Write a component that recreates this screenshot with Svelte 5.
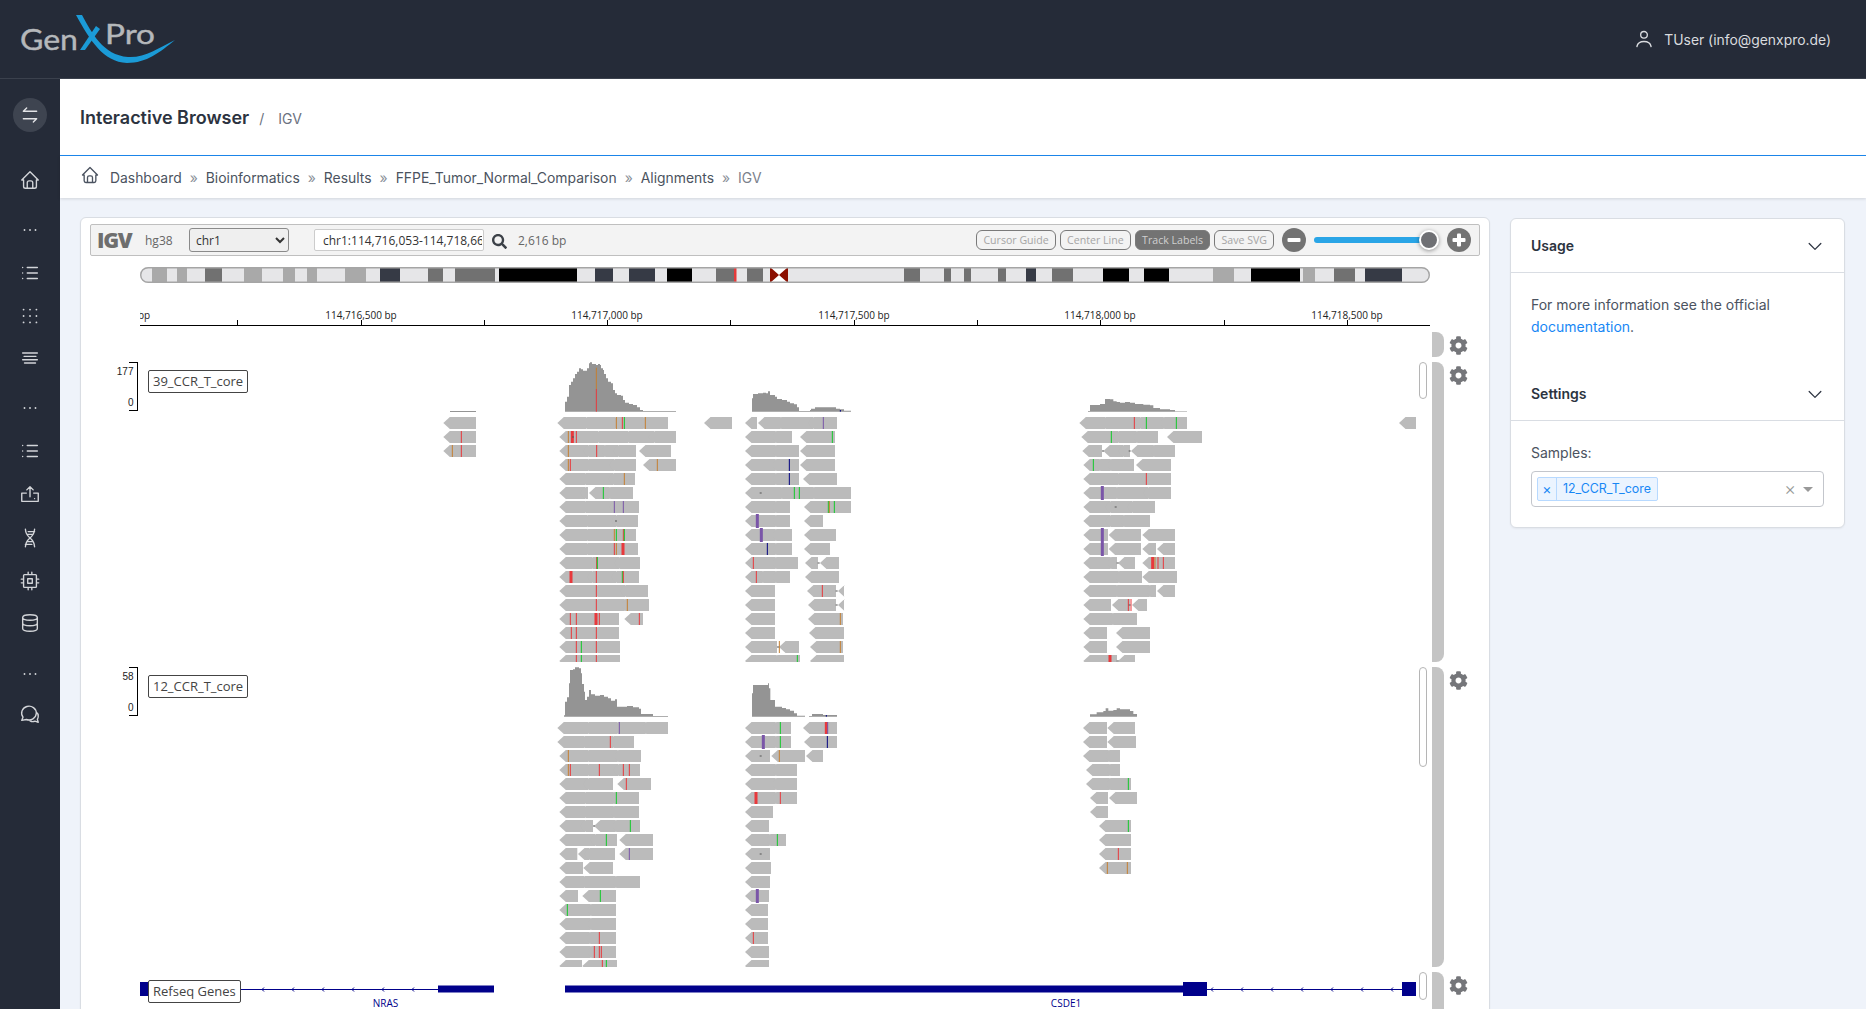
<script lang="ts">
	// sidebar entries, in order; `gap` marks the "..." section dividers
	const icons = {
		home: 'M5 12H3l9-9 9 9h-2 M5 12v7a2 2 0 0 0 2 2h10a2 2 0 0 0 2-2v-7 M9 21v-6a2 2 0 0 1 2-2h2a2 2 0 0 1 2 2v6',
		dots: 'M6 12h.01 M12 12h.01 M18 12h.01',
		list: 'M9 6h11 M9 12h11 M9 18h11 M4 6v.01 M4 12v.01 M4 18v.01',
		grid: 'M5 5h.01 M12 5h.01 M19 5h.01 M5 12h.01 M12 12h.01 M19 12h.01 M5 19h.01 M12 19h.01 M19 19h.01',
		lines: 'M4 6.5h16 M5.5 10.2h13 M4 13.9h16 M6 17.5h12',
		upload: 'M8 11H3v9h18v-9h-5 M12 15V4 M8.5 7.5 12 4l3.5 3.5 M17 17h.01',
		dna: 'M7 2.500c.2 4 2 7 5 9.500s4.800 5.500 5 9.500 M17 2.500c-.2 4-2 7-5 9.500s-4.800 5.500-5 9.500 M10 5h7 M9 8h6.500 M8.500 16h6.500 M7 19h7',
		cpu: 'M5 6a1 1 0 0 1 1-1h12a1 1 0 0 1 1 1v12a1 1 0 0 1-1 1H6a1 1 0 0 1-1-1z M9.5 9.5h5v5h-5z M2.5 10H5 M2.5 14H5 M10 2.5V5 M14 2.5V5 M21.5 10H19 M21.5 14H19 M14 21.5V19 M10 21.5V19',
		db: 'M4 6a8 3 0 1 0 16 0a8 3 0 1 0-16 0 M4 6v6a8 3 0 0 0 16 0V6 M4 12v6a8 3 0 0 0 16 0v-6',
		chat: 'M3 19l1.4-3.6A8 7.5 0 1 1 8 18z M18.6 9.5A6 6 0 0 1 21 14.5c0 1.4-.4 2.4-1 3.3l1 3.2-3.6-1.2c-1.6.7-3.6.7-5.4-.3'
	};
	const nav = [
		{ i: 'home' },
		{ i: 'dots', gap: true },
		{ i: 'list' },
		{ i: 'grid' },
		{ i: 'lines' },
		{ i: 'dots', gap: true },
		{ i: 'list' },
		{ i: 'upload' },
		{ i: 'dna' },
		{ i: 'cpu' },
		{ i: 'db' },
		{ i: 'dots', gap: true },
		{ i: 'chat' }
	];
	const crumbs = ['Dashboard', 'Bioinformatics', 'Results', 'FFPE_Tumor_Normal_Comparison', 'Alignments'];

	const GEAR =
		'M487.4 315.7l-42.6-24.6c4.3-23.2 4.3-47 0-70.2l42.6-24.6c4.9-2.8 7.1-8.6 5.5-14-11.1-35.6-30-67.8-54.7-94.6-3.8-4.1-10-5.1-14.8-2.3L380.8 110c-17.9-15.4-38.5-27.3-60.8-35.1V25.8c0-5.6-3.9-10.5-9.4-11.7-36.7-8.2-74.3-7.8-109.2 0-5.5 1.2-9.4 6.1-9.4 11.7V75c-22.2 7.9-42.8 19.8-60.8 35.1L88.7 85.5c-4.9-2.8-11-1.9-14.8 2.3-24.7 26.7-43.6 58.9-54.7 94.6-1.7 5.4.6 11.2 5.5 14L67.3 221c-4.3 23.2-4.3 47 0 70.2l-42.6 24.6c-4.9 2.8-7.1 8.6-5.5 14 11.1 35.6 30 67.8 54.7 94.6 3.8 4.1 10 5.1 14.8 2.3l42.6-24.6c17.9 15.4 38.5 27.3 60.8 35.1v49.2c0 5.6 3.9 10.5 9.4 11.7 36.7 8.2 74.3 7.8 109.2 0 5.5-1.2 9.4-6.1 9.4-11.7v-49.2c22.2-7.9 42.8-19.8 60.8-35.1l42.6 24.6c4.9 2.8 11 1.9 14.8-2.3 24.7-26.7 43.6-58.9 54.7-94.6 1.5-5.5-.7-11.3-5.6-14.1zM256 336c-44.1 0-80-35.9-80-80s35.9-80 80-80 80 35.9 80 80-35.9 80-80 80z';
	const SEARCH =
		'M505 442.7L405.3 343c-4.5-4.5-10.6-7-17-7H372c27.6-35.3 44-79.7 44-128C416 93.1 322.9 0 208 0S0 93.1 0 208s93.1 208 208 208c48.3 0 92.7-16.4 128-44v16.3c0 6.4 2.5 12.5 7 17l99.7 99.7c9.4 9.4 24.6 9.4 33.9 0l28.3-28.3c9.4-9.4 9.4-24.6.1-34zM208 336c-70.7 0-128-57.2-128-128 0-70.7 57.2-128 128-128 70.7 0 128 57.2 128 128 0 70.7-57.2 128-128 128z';

	// ideogram bands, genome pixels
	const A = '#a9a9a9', D = '#717171', K = '#363a45', B = '#000';
	const bands = [
		[152, 167, A], [177, 187, A], [205, 222, D], [244, 262, A], [283, 295, A], [307, 317, A], [345, 366, A],
		[380, 400, K], [428, 443, D], [455, 495, D], [499, 577, B], [595, 613, K], [629, 655, K], [667, 692, B],
		[716, 734, D], [734, 736.5, '#e43a3a'], [747, 763, D], [904, 920, D], [944, 951, D], [964, 971, D],
		[998, 1006, D], [1026, 1036, K], [1052, 1073, D], [1103, 1129, B], [1144, 1169, B], [1213, 1234, A],
		[1251, 1300, B], [1303, 1315, A], [1334, 1355, D], [1365, 1402, K]
	];
	const ticks = [237, 361, 484, 607, 730, 854, 977, 1100, 1224, 1347];
	const tickLabels = [
		[114.5, '114,716,000 bp'], [361, '114,716,500 bp'], [607, '114,717,000 bp'],
		[854, '114,717,500 bp'], [1100, '114,718,000 bp'], [1347, '114,718,500 bp']
	];

	const COLORS = { o: '#c57f32', r: '#e8393c', g: '#12c92a', p: '#7a55a8', n: '#00007f' };
	const ROW_H = 12;
	const PITCH = 14;

	// row strings: "a-b" is a read, "r123" a mismatch, "R" / "P" the wide ones, ".123" a small deletion.
	// x values are thirds of a pixel, from the group's ox.
	function layoutGroup(g, y0) {
		const reads = [];
		const marks = [];
		const dots = [];
		const X = (z) => g.ox + z / 3;
		g.rows.forEach((row, r) => {
			const y = y0 + PITCH * r;
			const tokens = row.split(' ');
			const segs = tokens.filter((t) => /^\d/.test(t)).map((t) => t.split('-').map(Number));
			segs.forEach(([a, b], k) => {
				const joined = segs[k + 1] && segs[k + 1][0] === b;
				const x1 = X(a);
				const x2 = X(b) + (joined ? 5.8 : 0);
				reads.push(`${x1},${y + 6} ${x1 + 6.5},${y} ${x2},${y} ${x2},${y + ROW_H} ${x1 + 6.5},${y + ROW_H}`);
			});
			for (const t of tokens) {
				if (/^\d/.test(t)) continue;
				const v = +t.slice(1);
				if (t[0] === '.') dots.push({ x: X(v) - 1, y: y + 5.5 });
				else if (t[0] === 'R') marks.push({ x: X(v) - 1.5, y, w: 3, h: ROW_H, c: COLORS.r });
				else if (t[0] === 'P') marks.push({ x: X(v) - 1.5, y: y - 1, w: 3, h: 14, c: COLORS.p });
				else marks.push({ x: X(v) - 0.5, y, w: 1, h: ROW_H, c: COLORS[t[0]] });
			}
		});
		return { reads, marks, dots };
	}

	// step outline for a coverage hill
	function covPath(c) {
		const X = (z) => c.ox + z / 3;
		const Y = (z) => c.oy + z / 3;
		let d = `M${X(c.pts[0][0])} ${Y(c.base)}`;
		c.pts.forEach(([x, y], i) => {
			const next = c.pts[i + 1] ? c.pts[i + 1][0] : c.end;
			d += `V${Y(y)}H${X(next)}`;
		});
		return d + `V${Y(c.base)}Z`;
	}

	const tracks = [
		{
			name: '39_CCR_T_core', top: 362, max: 177, thumb: 37,
			cov: [
				{ ox: 430, oy: 390, base: 66, end: 138, pts: [[60, 63]] },
				{
					ox: 540, oy: 350, base: 185, end: 408,
					pts: [[75, 155], [81, 140], [87, 105], [93, 95], [99, 85], [105, 72], [111, 65], [117, 55], [123, 58], [129, 62], [141, 55], [147, 40], [150, 37], [156, 42], [168, 45], [174, 42], [180, 45], [183, 55], [189, 60], [192, 72], [198, 85], [204, 95], [213, 100], [219, 120], [225, 130], [231, 135], [243, 137], [249, 150], [255, 158], [267, 162], [279, 165], [291, 172], [300, 180], [309, 183]],
					marks: [[169, 53, 117, COLORS.o], [169, 117, 185, COLORS.r]]
				},
				{
					ox: 540, oy: 350, base: 185, end: 933,
					pts: [[636, 145], [639, 132], [654, 130], [669, 128], [678, 130], [684, 124], [690, 135], [705, 140], [711, 147], [726, 150], [741, 155], [750, 160], [762, 163], [771, 172], [777, 183], [810, 180], [813, 176], [825, 172], [885, 172], [888, 176], [900, 178], [912, 182]],
					marks: [[901, 180, 185, COLORS.n]]
				},
				{
					ox: 1060, oy: 380, base: 95, end: 381,
					pts: [[84, 93], [90, 75], [120, 72], [135, 57], [150, 58], [160, 64], [170, 66], [180, 68], [195, 66], [210, 68], [225, 72], [250, 74], [270, 76], [280, 84], [300, 88], [330, 90], [345, 94]]
				}
			],
			groups: [
				{ ox: 430, rows: ['40-138', '40-138 r94', '40-138 o67 r94'] },
				{
					ox: 540,
					rows: [
						'52-122 122-208 208-294 294-384 492-576 615-651 654-705 705-802 802-891 o229 r247 g253 o316 p850',
						'58-158 158-248 248-326 326-408 615-690 690-756 780-885 o85 R97 r109 g877 .99',
						'58-127 127-177 177-217 217-288 297-393 615-690 690-777 780-885 o85 r170',
						'58-127 127-205 205-288 309-408 615-690 690-777 780-885 o85 r91 o352 n748',
						'58-118 118-202 202-285 615-690 690-777 789-891 o253 n748',
						'58-118 118-144 147-192 192-279 615-708 708-804 804-933 g190 g763 g778 .662',
						'58-118 118-205 205-297 615-690 690-750 792-933 p223 p250 g865 o868 g883',
						'58-124 124-211 211-294 615-690 690-750 792-849 .228 P652',
						'58-124 124-211 211-288 615-690 690-756 792-888 o223 g229 r250 g253 P664',
						'58-124 124-211 211-294 615-690 690-756 792-870 r223 o229 R249 n682',
						'58-139 139-220 220-300 615-690 690-774 795-834 840-897 r170 g172 r640 .836',
						'58-139 139-211 211-297 615-651 651-690 690-750 795-897 R93 r169 g247 r250 r649',
						'58-154 154-238 238-324 615-705 801-888 894-912 r169 r847 .890',
						'58-154 154-237 237-327 615-705 804-888 894-912 r169 o262 .890',
						'58-154 154-237 253-309 615-705 804-909 r91 r109 R168 r178 r298 o901',
						'58-154 154-237 615-705 807-912 r94 r109 r169',
						'58-154 154-240 615-711 717-777 810-909 r109 g124 r169 o718 o901 .714',
						'58-154 154-240 615-693 693-780 810-912 r109 g124 r169 g772'
					]
				},
				{
					ox: 1060,
					rows: [
						'58-118 118-223 223-294 294-381 1017-1068 r223 g259 g349',
						'64-157 157-213 213-294 321-426 g154',
						'67-126 130-172 172-210 213-264 264-345 .129 .209',
						'70-102 102-135 135-222 228-333 g100',
						'70-157 157-241 241-333 r259',
						'70-153 153-247 247-333 P127',
						'70-133 133-199 199-285 .167',
						'70-133 133-174 174-270',
						'70-144 146-243 247-345 P127',
						'70-144 146-243 247-288 291-345 P127',
						'70-135 135-171 174-225 247-345 R278 o285 r294 r310 .173',
						'70-159 159-246 247-351',
						'70-153 153-252 252-288 291-345',
						'70-153 156-210 216-261 r205 r213 .209',
						'70-141 141-231',
						'70-141 168-270',
						'70-141 168-270',
						'70-171 174-225 R150 .173'
					]
				}
			]
		},
		{
			name: '12_CCR_T_core', top: 667, max: 58, thumb: 100,
			cov: [
				{
					ox: 540, oy: 660, base: 170, end: 384,
					pts: [[72, 166], [75, 125], [81, 112], [87, 70], [90, 30], [99, 28], [105, 22], [117, 25], [123, 40], [126, 72], [132, 95], [135, 120], [141, 110], [147, 90], [153, 103], [165, 107], [180, 105], [192, 110], [204, 115], [213, 122], [225, 118], [231, 140], [255, 140], [261, 138], [279, 142], [297, 146], [303, 162], [339, 168]]
				},
				{
					ox: 540, oy: 660, base: 170, end: 795,
					pts: [[636, 100], [639, 75], [681, 75], [684, 70], [687, 85], [691, 120], [705, 140], [714, 140], [726, 144], [738, 148], [750, 152], [762, 160], [771, 167]]
				},
				{
					ox: 540, oy: 660, base: 170, end: 891,
					pts: [[807, 168], [816, 162], [849, 165]],
					marks: [[859, 165, 170, COLORS.n]]
				},
				{
					ox: 1040, oy: 680, base: 110, end: 291,
					pts: [[150, 103], [170, 97], [190, 93], [197, 85], [205, 92], [220, 90], [230, 85], [240, 88], [270, 93], [280, 102]]
				}
			],
			groups: [
				{
					ox: 540,
					rows: [
						'52-127 127-214 214-300 300-384 615-690 690-753 789-891 p238 g721 R859 p863',
						'52-115 115-202 202-282 615-690 690-753 792-891 r211 P670 g721 n862',
						'58-127 127-216 216-303 615-690 694-795 798-849 o85 o718 .662',
						'58-127 127-217 217-300 615-690 690-771 o85 r91 r178 r250 r268',
						'58-127 127-219 232-333 615-690 690-771 r259',
						'58-118 118-204 204-297 615-690 690-771 g229 R648 r721',
						'58-118 118-204 204-297 615-699',
						'58-118 118-159 162-210 210-300 615-687 g271 .162',
						'58-148 148-231 238-339 615-672 672-738 g199 g712',
						'58-112 114-130 130-225 238-339 615-690 p268 .662',
						'58-129 130-219 615-693',
						'58-115 115-210 210-300 615-690',
						'58-114 127-228 615-687 g181 P652',
						'58-135 135-228 615-684 g82',
						'58-135 135-228 615-684',
						'58-132 132-228 615-684 r178 r640',
						'58-135 135-228 615-687 r163 r178 r184',
						'58-126 127-231 615-687 r187 g199'
					]
				},
				{
					ox: 1040,
					rows: [
						'129-201 202-285',
						'129-201 202-288',
						'129-189 189-240',
						'138-192 192-240',
						'138-192 192-273 g265',
						'150-204 207-291',
						'150-204',
						'177-273 g265',
						'177-273',
						'177-273 r235',
						'177-273 o202 o262'
					]
				}
			]
		}
	].map((t) => ({
		...t,
		drawn: t.groups.map((g) => layoutGroup(g, t.top + 55)),
		hills: t.cov.map((c) => ({
			d: covPath(c),
			marks: (c.marks || []).map(([x, y1, y2, col]) => ({
				x: c.ox + x / 3 - 0.5,
				y: c.oy + y1 / 3,
				h: (y2 - y1) / 3,
				col
			}))
		}))
	}));

	const nrasArrows = [263, 293, 323, 353, 383, 413];
	const csdeArrows = [1212, 1242, 1272, 1302, 1332, 1362, 1392];
</script>

<div class="app">
	<header class="topbar">
		<svg class="logo" viewBox="0 0 180 78" width="180" height="78" aria-label="GenXPro logo">
			<text x="20" y="50" class="logo-text" font-size="29" textLength="58" lengthAdjust="spacingAndGlyphs">Gen</text>
			<text x="105" y="44" class="logo-text" font-size="26" textLength="50" lengthAdjust="spacingAndGlyphs">Pro</text>
			<path d="M80 50 85 50 100 29 96 26Z" fill="#1b9bd7" />
			<path d="M76 15 82 15C92 33 103 55 128 57 145 58 158 48 175 40 160 52 147 63 127 63 103 62 90 40 76 15Z" fill="#1b9bd7" />
		</svg>
		<div class="user">
			<svg width="20" height="20" viewBox="0 0 24 24" fill="none" stroke="currentColor" stroke-width="1.6" stroke-linecap="round">
				<path d="M8 7a4 4 0 1 0 8 0a4 4 0 0 0-8 0 M3.5 21c.8-3.800 3.500-6 8.500-6s7.700 2.200 8.500 6" />
			</svg>
			<span class="user-name">TUser (info@genxpro.de)</span>
		</div>
	</header>

	<div class="below">
		<aside class="sidebar">
			<button class="toggle" aria-label="Toggle menu">
				<svg width="20" height="20" viewBox="0 0 24 24" fill="none" stroke="currentColor" stroke-width="1.6" stroke-linecap="round" stroke-linejoin="round">
					<path d="M4 7.500h16 M4 7.500l4-4 M20 16.500H4 M20 16.500l-4 4" />
				</svg>
			</button>
			<nav class="nav">
				{#each nav as item}
					<div class="nav-item {item.i}" class:gap={item.gap}>
						<svg width="22" height="22" viewBox="0 0 24 24" fill="none" stroke="currentColor" stroke-width="1.5" stroke-linecap="round" stroke-linejoin="round">
							<path d={icons[item.i]} />
						</svg>
					</div>
				{/each}
			</nav>
		</aside>

		<main class="main">
			<div class="titlebar">
				<h1>Interactive Browser</h1>
				<span class="slash">/</span>
				<span class="subtitle">IGV</span>
			</div>
			<div class="crumbs">
				<svg class="crumb-home" width="20" height="20" viewBox="0 0 24 24" fill="none" stroke="currentColor" stroke-width="1.6" stroke-linecap="round" stroke-linejoin="round">
					<path d={icons.home} />
				</svg>
				{#each crumbs as c}
					<span class="crumb">{c}</span><span class="sep">»</span>
				{/each}
				<span class="crumb current">IGV</span>
			</div>

			<div class="content">
				<section class="card igv">
					<div class="igv-nav">
						<span class="igv-logo">IGV</span>
						<span class="genome">hg38</span>
						<select class="chrom"><option>chr1</option></select>
						<input class="locus" value="chr1:114,716,053-114,718,669" />
						<svg class="search" width="15" height="15" viewBox="0 0 512 512"><path d={SEARCH} fill="#3c4148" /></svg>
						<span class="bp">2,616 bp</span>
						<div class="nav-buttons">
							<span class="pill">Cursor Guide</span>
							<span class="pill">Center Line</span>
							<span class="pill on">Track Labels</span>
							<span class="pill">Save SVG</span>
						</div>
						<svg class="zoom-btn" width="24" height="24" viewBox="0 0 24 24">
							<circle cx="12" cy="12" r="12" fill="#737373" />
							<rect x="5.500" y="10" width="13" height="4" rx="1" fill="#fff" />
						</svg>
						<div class="slider"><span class="slider-knob"></span></div>
						<svg class="zoom-btn" width="24" height="24" viewBox="0 0 24 24">
							<circle cx="12" cy="12" r="12" fill="#737373" />
							<rect x="5.500" y="10" width="13" height="4" rx="1" fill="#fff" />
							<rect x="10" y="5.500" width="4" height="13" rx="1" fill="#fff" />
						</svg>
					</div>

					<svg class="ideogram" width="1290" height="16" viewBox="140 267 1290 16">
						<defs>
							<clipPath id="ideo-clip"><rect x="140" y="267" width="1290" height="16" rx="8" /></clipPath>
						</defs>
						<g clip-path="url(#ideo-clip)">
							<rect x="140" y="267" width="1290" height="16" fill="#e6e6e8" />
							{#each bands as [a, b, fill]}
								<rect x={a} y="267" width={b - a} height="16" {fill} />
							{/each}
							<rect x="770" y="267" width="18" height="16" fill="#fff" />
							<path d="M770 267 779 275 770 283Z M788 267 779 275 788 283Z" fill="#8b0f00" />
						</g>
						<rect x="140.700" y="267.700" width="1288.600" height="14.600" rx="7.500" fill="none" stroke="#a5a5a5" stroke-width="1.400" />
					</svg>

					<svg class="ruler" width="1290" height="44" viewBox="140 283 1290 44">
						<path d="M140 325.500H1430" stroke="#000" stroke-width="1.200" />
						{#each ticks as t}
							<path d="M{t + 0.5} 320V325" stroke="#000" />
						{/each}
						{#each tickLabels as [x, label]}
							<text {x} y="319" text-anchor="middle" class="tick-label">{label}</text>
						{/each}
					</svg>

					<div class="track short">
						<div class="viewport"></div>
						<div class="bar"></div>
						<svg class="gear" width="19" height="19" viewBox="0 0 512 512"><path d={GEAR} /></svg>
					</div>

					{#each tracks as t}
						<div class="track tall">
							<svg class="viewport" width="1290" height="300" viewBox="140 {t.top} 1290 300">
								{#each t.hills as h}
									<path d={h.d} fill="#949494" />
									{#each h.marks as m}
										<rect x={m.x} y={m.y} width="1" height={m.h} fill={m.col} />
									{/each}
								{/each}
								{#each t.drawn as g}
									{#each g.reads as points}
										<polygon {points} fill="#bbb" />
									{/each}
									{#each g.marks as m}
										<rect x={m.x} y={m.y} width={m.w} height={m.h} fill={m.c} />
									{/each}
									{#each g.dots as d}
										<rect x={d.x} y={d.y} width="2" height="1" fill="#555" />
									{/each}
								{/each}
							</svg>
							<div class="range">
								<span class="range-max">{t.max}</span>
								<span class="range-min">0</span>
							</div>
							<span class="track-label">{t.name}</span>
							<span class="thumb" style:height="{t.thumb}px"></span>
							<div class="bar"></div>
							<svg class="gear" width="19" height="19" viewBox="0 0 512 512"><path d={GEAR} /></svg>
						</div>
					{/each}

					<div class="track genes">
						<svg class="viewport" width="1290" height="40" viewBox="140 972 1290 40">
							<rect x="140" y="982" width="12" height="14" fill="#00008b" />
							<path d="M241 989.500H438 M1207 989.500H1402" stroke="#00008b" stroke-width="1.200" />
							{#each [...nrasArrows, ...csdeArrows] as x}
								<path d="M{x + 1} 987.500 {x - 1} 989.500 {x + 1} 991.500" fill="none" stroke="#00008b" />
							{/each}
							<rect x="438" y="985.500" width="56" height="7" fill="#00008b" />
							<rect x="565" y="985.500" width="618" height="7" fill="#00008b" />
							<rect x="1183" y="982" width="24" height="14" fill="#00008b" />
							<rect x="1402" y="982" width="14" height="14" fill="#00008b" />
							<text x="385.500" y="1007" text-anchor="middle" class="gene-name">NRAS</text>
							<text x="1066" y="1007" text-anchor="middle" class="gene-name">CSDE1</text>
						</svg>
						<span class="track-label refseq">Refseq Genes</span>
						<span class="thumb" style:height="28px"></span>
						<div class="bar"></div>
						<svg class="gear" width="19" height="19" viewBox="0 0 512 512"><path d={GEAR} /></svg>
					</div>
				</section>

				<aside class="card panel">
					<div class="panel-head">
						<span>Usage</span>
						<svg width="20" height="20" viewBox="0 0 24 24" fill="none" stroke="currentColor" stroke-width="1.5" stroke-linecap="round" stroke-linejoin="round"><path d="M5 9l7 7 7-7" /></svg>
					</div>
					<div class="panel-body usage">
						For more information see the official <a href="#docs">documentation</a>.
					</div>
					<div class="panel-head">
						<span>Settings</span>
						<svg width="20" height="20" viewBox="0 0 24 24" fill="none" stroke="currentColor" stroke-width="1.5" stroke-linecap="round" stroke-linejoin="round"><path d="M5 9l7 7 7-7" /></svg>
					</div>
					<div class="panel-body">
						<div class="field-label">Samples:</div>
						<div class="multi">
							<span class="tag"><span class="tag-x">×</span><span class="tag-name">12_CCR_T_core</span></span>
							<span class="multi-clear">×</span>
							<span class="multi-caret"></span>
						</div>
					</div>
				</aside>
			</div>
		</main>
	</div>
</div>

<style>
	:global(body) {
		margin: 0;
		font-family: Inter, "Liberation Sans", sans-serif;
	}
	.app {
		height: 1009px;
		display: flex;
		flex-direction: column;
		overflow: hidden;
	}
	.topbar {
		height: 78px;
		flex: none;
		background: #252b38;
		border-bottom: 1px solid #3b414d;
		display: flex;
		align-items: center;
		justify-content: space-between;
		padding-right: 35px;
	}
	.logo {
		display: block;
	}
	.logo-text {
		font-family: Lato, Inter, sans-serif;
		fill: #b5b8bb;
		stroke: #b5b8bb;
		stroke-width: 0.4;
	}
	.user {
		display: flex;
		align-items: center;
		gap: 10px;
		color: #d9dbdf;
		font-size: 13.900px;
	}
	.user-name {
		margin-top: 1px;
	}
	.below {
		flex: 1;
		display: flex;
		min-height: 0;
	}
	.sidebar {
		width: 60px;
		flex: none;
		background: #252b38;
		display: flex;
		flex-direction: column;
		align-items: center;
		padding-top: 19px;
		color: #d3d5d9;
	}
	.toggle {
		width: 34px;
		height: 34px;
		border: 0;
		padding: 0;
		border-radius: 50%;
		background: #3e4450;
		color: #e3e4e7;
		display: flex;
		align-items: center;
		justify-content: center;
	}
	.nav {
		margin-top: 27px;
		display: flex;
		flex-direction: column;
	}
	.nav-item {
		height: 42.600px;
		display: flex;
		align-items: center;
		justify-content: center;
	}
	.nav-item.gap {
		margin-top: 7.600px;
	}
	.nav-item.dots path,
	.nav-item.grid path {
		stroke-width: 2;
	}
	.nav-item.dna {
		margin-top: 2px;
	}
	.nav-item.chat {
		margin-top: -2px;
	}
	.main {
		flex: 1;
		min-width: 0;
		display: flex;
		flex-direction: column;
		background: #eff3fa;
	}
	.titlebar {
		height: 76px;
		flex: none;
		background: #fff;
		border-bottom: 1px solid #1c88ee;
		display: flex;
		align-items: center;
		padding-left: 20px;
		box-sizing: content-box;
	}
	h1 {
		margin: 0;
		font-size: 18px;
		font-weight: 600;
		color: #2c3340;
	}
	.slash {
		margin: 3px 0 0 10px;
		font-size: 14px;
		color: #6b7280;
	}
	.subtitle {
		margin: 3px 0 0 14px;
		font-size: 14px;
		color: #6b7280;
	}
	.crumbs {
		height: 42px;
		box-sizing: border-box;
		padding-top: 1px;
		flex: none;
		background: #fff;
		display: flex;
		align-items: center;
		padding-left: 20px;
		font-size: 13.900px;
		color: #4b5360;
		box-shadow: 0 1px 3px rgba(0, 0, 0, 0.13);
		position: relative;
	}
	.crumb-home {
		margin-right: 10px;
		margin-top: -5px;
	}
	.sep {
		margin: 0 8px;
		color: #8a8f98;
	}
	.current {
		color: #7b818b;
	}
	.content {
		flex: 1;
		min-height: 0;
		padding: 19px 21px 0 20px;
		display: flex;
		gap: 20px;
		align-items: flex-start;
	}
	.card {
		background: #fff;
		border: 1px solid #d9dde3;
		border-radius: 6px;
		box-sizing: border-box;
		box-shadow: 0 1px 2px rgba(0, 0, 0, 0.05);
	}
	.igv {
		width: 1410px;
		flex: none;
		padding: 6px 9px 0;
		height: 900px;
		font-family: "Open Sans", sans-serif;
	}
	.igv-nav {
		height: 32px;
		box-sizing: border-box;
		background: #f3f3f3;
		border: 1px solid #bfbfbf;
		border-radius: 2px;
		display: flex;
		align-items: center;
		padding: 0 8px 0 7px;
		color: #666;
		font-size: 12px;
	}
	.igv-logo {
		font-size: 21.500px;
		font-weight: 800;
		color: #6e6e6e;
		letter-spacing: -1.300px;
		line-height: 1;
		margin-left: -1px;
		width: 48px;
	}
	.genome {
		width: 44px;
	}
	.chrom {
		width: 100px;
		height: 24px;
		border: 1px solid #8a8a8a;
		border-radius: 3px;
		background-color: #efefef;
		font: 12px "Open Sans", sans-serif;
		color: #333;
		padding-left: 2px;
	}
	.locus {
		width: 170px;
		height: 22px;
		margin-left: 25px;
		box-sizing: border-box;
		border: 1px solid #ccc;
		border-radius: 2px;
		padding: 0 1px 0 8px;
		font: 12px "Open Sans", sans-serif;
		color: #333;
		background: #fff;
	}
	.search {
		margin: 3px 0 0 8px;
	}
	.bp {
		margin-left: 11px;
	}
	.nav-buttons {
		margin-left: auto;
		display: flex;
		gap: 4.400px;
	}
	.pill {
		height: 20px;
		box-sizing: border-box;
		border: 1px solid #7a7a7a;
		border-radius: 6px;
		padding: 0 6px;
		font-size: 10.600px;
		line-height: 18px;
		color: #a5a5a5;
	}
	.pill.on {
		background: #737373;
		color: #d0d0d0;
	}
	.zoom-btn {
		flex: none;
	}
	.nav-buttons + .zoom-btn {
		margin-left: 8px;
	}
	.slider {
		width: 116px;
		height: 6px;
		margin: 0 17px 0 8px;
		border-radius: 3px;
		background: #2aa5e6;
		position: relative;
	}
	.slider-knob {
		position: absolute;
		right: -9px;
		top: -7px;
		width: 20px;
		height: 20px;
		box-sizing: border-box;
		border-radius: 50%;
		background: #6f7074;
		border: 2px solid #fff;
		box-shadow: 0 1px 4px rgba(0, 0, 0, 0.4);
	}
	.ideogram {
		display: block;
		margin: 11px 0 0 50px;
	}
	.ruler {
		display: block;
		margin-left: 50px;
	}
	.tick-label {
		font-size: 10px;
		fill: #222;
	}
	.track {
		position: relative;
		display: flex;
		padding-left: 50px;
		margin-bottom: 5px;
	}
	.track.short {
		height: 25px;
		margin-top: 5px;
	}
	.track.tall {
		height: 300px;
	}
	.track.genes {
		height: 60px;
	}
	.viewport {
		display: block;
		width: 1290px;
		flex: none;
	}
	.bar {
		width: 12px;
		margin-left: 2px;
		background: #c4c4c4;
		border-radius: 0 8px 8px 0;
		flex: none;
	}
	.gear {
		flex: none;
		margin: 3.500px 0 0 4.500px;
		fill: #75767a;
	}
	.thumb {
		position: absolute;
		left: 1329px;
		top: 0;
		width: 8px;
		box-sizing: border-box;
		background: #fff;
		border: 1px solid #b5b5b5;
		border-radius: 4px;
	}
	.range {
		position: absolute;
		left: 39px;
		top: 0;
		width: 7.500px;
		height: 47px;
		border: solid #000;
		border-width: 1px 1.500px 1px 0;
		font: 10px "Liberation Sans", sans-serif;
		color: #222;
	}
	.range span {
		position: absolute;
		right: 3px;
		line-height: 12px;
	}
	.range-max {
		top: 3px;
	}
	.range-min {
		bottom: 1px;
	}
	.track-label {
		position: absolute;
		left: 58px;
		top: 8px;
		height: 23px;
		box-sizing: border-box;
		background: #fff;
		border: 1px solid #444;
		border-radius: 2px;
		padding: 0 4px;
		font-size: 13px;
		line-height: 21px;
		color: #444;
	}
	.gene-name {
		font-size: 10px;
		fill: #00008b;
	}
	.panel {
		width: 335px;
		flex: none;
		margin-top: 1px;
		font-size: 14px;
		color: #4b5360;
		height: 310px;
	}
	.panel-head {
		height: 54px;
		box-sizing: border-box;
		display: flex;
		align-items: center;
		justify-content: space-between;
		padding: 0 19px 0 20px;
		font-weight: 600;
		color: #2c3340;
		border-bottom: 1px solid #d9dde3;
	}
	.panel-body {
		padding: 21px 20px 0;
		line-height: 22px;
	}
	.usage {
		height: 94px;
		box-sizing: border-box;
		padding-right: 30px;
	}
	a {
		color: #1787f5;
		text-decoration: none;
	}
	.multi {
		height: 36px;
		margin-top: 7px;
		box-sizing: border-box;
		border: 1px solid #c3c6cc;
		border-radius: 4px;
		display: flex;
		align-items: center;
		padding: 0 10px 0 5px;
	}
	.tag {
		display: flex;
		height: 24px;
		box-sizing: border-box;
		background: #ebf4ff;
		border: 1px solid #b7d9ff;
		border-radius: 2px;
		color: #1787f5;
		font-size: 12.400px;
		line-height: 22px;
	}
	.tag-x {
		width: 18px;
		text-align: center;
		border-right: 1px solid #b7d9ff;
		font-size: 14px;
	}
	.tag-name {
		padding: 0 6px;
	}
	.multi-clear {
		margin-left: auto;
		color: #999;
		font-size: 18px;
		font-weight: 300;
		line-height: 1;
	}
	.multi-caret {
		margin-left: 7px;
		width: 0;
		height: 0;
		border: solid transparent;
		border-width: 5px 5px 0;
		border-top-color: #999;
	}
</style>
